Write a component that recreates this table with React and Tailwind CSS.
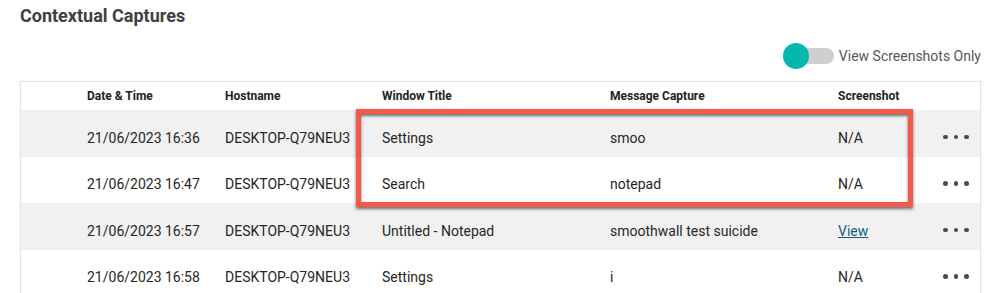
import React, { useState } from 'react';

const rows = [
    { date: '21/06/2023 16:36', host: 'DESKTOP-Q79NEU3', title: 'Settings', message: 'smoo', shot: null },
    { date: '21/06/2023 16:47', host: 'DESKTOP-Q79NEU3', title: 'Search', message: 'notepad', shot: null },
    { date: '21/06/2023 16:57', host: 'DESKTOP-Q79NEU3', title: 'Untitled - Notepad', message: 'smoothwall test suicide', shot: 'view' },
    { date: '21/06/2023 16:58', host: 'DESKTOP-Q79NEU3', title: 'Settings', message: 'i', shot: null },
];

const cols = 'grid grid-cols-[66px_138px_157px_228px_228px_105px_1fr]';

const Dots = () => (
    <div className="flex items-center gap-[6px]">
        <span className="w-[4.5px] h-[4.5px] rounded-full bg-[#4a4a4a]" />
        <span className="w-[4.5px] h-[4.5px] rounded-full bg-[#4a4a4a]" />
        <span className="w-[4.5px] h-[4.5px] rounded-full bg-[#4a4a4a]" />
    </div>
);

const App = () => {
    const [screensOnly, setScreensOnly] = useState(true);

    return (
        <div className="w-[1002px] h-[293px] overflow-hidden bg-white font-['Roboto',sans-serif] px-[20px] pr-[21px]">
            <h2 className="pt-[4px] text-[18px] leading-[24px] font-bold text-[#404040]">Contextual Captures</h2>

            {/* Toggle */}
            <div className="flex justify-end mt-[15px]">
                <button
                    onClick={() => setScreensOnly(!screensOnly)}
                    className="flex items-center gap-[5px]"
                >
                    <span className="relative w-[51px] h-[26px] flex items-center">
                        <span className="ml-[12px] w-[39px] h-[16px] rounded-full bg-[#cfcfcf]" />
                        <span className="absolute left-0 top-0 w-[26px] h-[26px] rounded-full bg-[#05b8ad]" />
                    </span>
                    <span className="text-[14px] leading-[20px] text-[#575757]">View Screenshots Only</span>
                </button>
            </div>

            {/* Table */}
            <div className="relative mt-[12px] border border-[#e4e4e4] shadow-[0_0_2px_rgba(0,0,0,0.08)]">
                <div className={`${cols} h-[28px] items-center text-[12px] font-bold text-[#222]`}>
                    <div />
                    <div>Date &amp; Time</div>
                    <div>Hostname</div>
                    <div>Window Title</div>
                    <div>Message Capture</div>
                    <div>Screenshot</div>
                    <div />
                </div>
                {rows.map((r, i) => (
                    <div
                        key={i}
                        className={`${cols} h-[46.5px] pt-[10px] items-center text-[14px] text-[#262626] ${i % 2 === 0 ? 'bg-[#f1f1f1]' : 'bg-white'}`}
                    >
                        <div />
                        <div>{r.date}</div>
                        <div>{r.host}</div>
                        <div>{r.title}</div>
                        <div>{r.message}</div>
                        <div>
                            {r.shot ? (
                                <a href="#" className="text-[#11607f] underline">View</a>
                            ) : 'N/A'}
                        </div>
                        <div className="-mt-[3px]"><Dots /></div>
                    </div>
                ))}

                {/* Annotation box */}
                <div className="absolute left-[335px] top-[27px] w-[557px] h-[98px] border-[5px] border-[#f6584a] shadow-[0_2px_3px_rgba(0,0,0,0.55),inset_0_2px_3px_rgba(0,0,0,0.55)] pointer-events-none" />
            </div>
        </div>
    );
};

export default App;
